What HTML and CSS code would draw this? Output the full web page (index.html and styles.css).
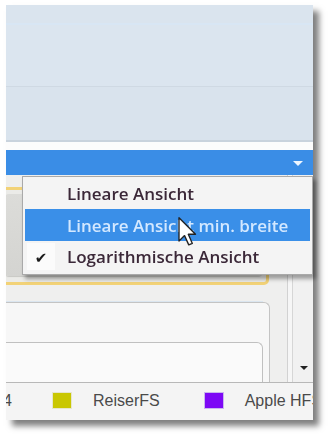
FILE: index.html
```html
<!DOCTYPE html>
<html lang="de">
<head>
<meta charset="utf-8">
<link rel="stylesheet" href="styles.css">
</head>
<body>
<div class="stage">
  <div class="window">
    <div class="top-panel">
      <div class="top-panel__band"></div>
      <div class="top-panel__lower"></div>
    </div>
    <div class="gap"></div>
    <div class="combo">
      <span class="combo__arrow"></span>
    </div>
    <div class="content">
      <div class="cards">
        <div class="card card--selected">
          <div class="card__inner"></div>
        </div>
        <div class="card card--plain">
          <div class="card card--nested"></div>
        </div>
      </div>
      <div class="scrollbar">
        <span class="scrollbar__arrow"></span>
      </div>
    </div>
    <div class="legend">
      <span class="legend__tail"><span>ext4</span></span>
      <span class="legend__item"><span class="swatch swatch--reiser"></span><span>ReiserFS</span></span>
      <span class="legend__item"><span class="swatch swatch--hfs"></span><span>Apple HFS+</span></span>
    </div>

    <ul class="menu">
      <li class="menu__item"><span class="menu__icon"></span><span class="menu__label">Lineare Ansicht</span></li>
      <li class="menu__item menu__item--hover"><span class="menu__icon"></span><span class="menu__label">Lineare Ansicht min. breite</span></li>
      <li class="menu__item menu__item--checked"><span class="menu__icon">&#10004;</span><span class="menu__label">Logarithmische Ansicht</span></li>
    </ul>

    <svg class="cursor" width="20" height="30" viewBox="0 0 13 20">
      <path d="M0.5 0.5 L0.5 16 L4.2 12.4 L7 18.6 L9.4 17.6 L6.7 11.5 L11.5 11.5 Z" fill="#fff" stroke="#222" stroke-width="0.9" stroke-linejoin="round"/>
    </svg>
  </div>
</div>
</body>
</html>
```

FILE: styles.css
```css
* { box-sizing: border-box; }

html, body {
  margin: 0;
  padding: 0;
  width: 328px;
  height: 434px;
  overflow: hidden;
  background: #fff;
}

.stage {
  width: 328px;
  height: 434px;
  padding: 5px 0 0 6px;
  filter: blur(0.45px);
}

.window {
  position: relative;
  width: 307px;
  height: 415px;
  display: flex;
  flex-direction: column;
  background: #fff;
  box-shadow: 6px 6px 6px rgba(0, 0, 0, 0.5);
}

/* top blue panel */
.top-panel {
  height: 137px;
  display: flex;
  flex-direction: column;
  background: #dbe5ef;
  border-bottom: 2px solid #c9d3dd;
}
.top-panel__band {
  height: 20px;
  border-bottom: 2px solid #d8e6f4;
  background: #dae4ee;
}
.top-panel__lower {
  margin-top: 61px;
  flex: 1;
  border-top: 1px solid #cfd9e3;
  background: #d9e3ed;
}

.gap {
  height: 8px;
  background: #fcfcfc;
}

/* combo bar */
.combo {
  height: 25px;
  background: #3a8de6;
  display: flex;
  align-items: center;
  justify-content: flex-end;
  padding-right: 10px;
}
.combo__arrow {
  width: 0;
  height: 0;
  border-left: 5px solid transparent;
  border-right: 5px solid transparent;
  border-top: 5px solid #eef6ff;
  margin-top: 2px;
}

/* content */
.content {
  height: 207px;
  display: flex;
  justify-content: space-between;
  overflow: hidden;
  background: #efefee;
}
.cards {
  width: 272px;
  margin-left: -8px;
  display: flex;
  flex-direction: column;
}
.card {
  border-radius: 5px;
}
.card--selected {
  margin-top: 12px;
  margin-right: 1px;
  height: 118px;
  border: 3px solid #f2d277;
  background: #ebebe8;
  padding: 4px 4px 6px 4px;
}
.card__inner {
  height: 100%;
  border-radius: 4px;
  background: linear-gradient(#dcdcd9, #d4d4d1);
  box-shadow: 0 1px 1px #c8c8c4;
}
.card--plain {
  margin-top: 17px;
  flex: 1;
  border: 1px solid #c4c4c4;
  border-bottom: none;
  background: #f7f7f7;
  padding: 39px 6px 0 0;
  border-radius: 5px 6px 0 0;
  box-shadow: 0 -8px 0 -7px #dbe6f0;
}
.card--nested {
  height: 40px;
  border: 1px solid #c0c0c0;
  border-bottom: none;
  border-radius: 0 6px 0 0;
  background: #fafafa;
}

.scrollbar {
  width: 26px;
  border-left: 1px solid #d2d2d2;
  background: #f1f1f1;
  position: relative;
  display: flex;
  flex-direction: column;
  justify-content: flex-end;
  align-items: center;
  padding-bottom: 12px;
  box-shadow: inset 4px 0 0 #f6f6f6, inset 5px 0 0 #d6d6d6;
}
.scrollbar__arrow {
  width: 0;
  height: 0;
  margin-left: 6px;
  border-left: 4px solid transparent;
  border-right: 4px solid transparent;
  border-top: 4px solid #222;
}

/* legend */
.legend {
  height: 38px;
  border-top: 1px solid #b8b8b8;
  background: #f4f4f4;
  display: flex;
  align-items: center;
  gap: 40px;
  overflow: hidden;
  font-family: "Liberation Sans", Arial, sans-serif;
  font-size: 16px;
  color: #4a4a4a;
  white-space: nowrap;
  padding-bottom: 2px;
}
.legend__tail {
  width: 6px;
  display: flex;
  justify-content: flex-end;
  overflow: hidden;
  flex: none;
}
.legend__item {
  display: flex;
  align-items: center;
  gap: 21px;
  flex: none;
}
.legend__item + .legend__item {
  margin-left: 4px;
}
.swatch {
  width: 20px;
  height: 17px;
  border: 1px solid #e6e6cc;
}
.swatch--reiser { background: #c9c702; }
.swatch--hfs { background: #7d08f5; border-color: #c9b7ee; }

/* dropdown menu */
.menu {
  position: absolute;
  left: 16px;
  top: 171px;
  width: 291px;
  margin: 0;
  padding: 1px 2px 2px;
  list-style: none;
  background: #f4f4f4;
  border: 1px solid #a9a9a9;
  box-shadow: 3px 4px 4px rgba(0, 0, 0, 0.35);
  font-family: "Open Sans", "DejaVu Sans", sans-serif;
  font-size: 17px;
  font-weight: 600;
}
.menu__item {
  height: 31px;
  display: flex;
  align-items: center;
  color: #3b2838;
  white-space: nowrap;
}
.menu__item--hover {
  height: 32px;
  background: #3a8fe8;
  color: #d3e8ff;
}
.menu__icon {
  width: 40px;
  flex: none;
  align-self: stretch;
  display: flex;
  align-items: center;
  justify-content: center;
  font-size: 15px;
  color: #1a1a1a;
  margin-left: 2px;
}
.menu__item--checked .menu__icon {
  background: #fbfbfb;
  margin: 2px 0 2px 2px;
  width: 28px;
  margin-right: 12px;
}
.menu__label {
  letter-spacing: 0;
}

.cursor {
  position: absolute;
  left: 172px;
  top: 212px;
}
```
